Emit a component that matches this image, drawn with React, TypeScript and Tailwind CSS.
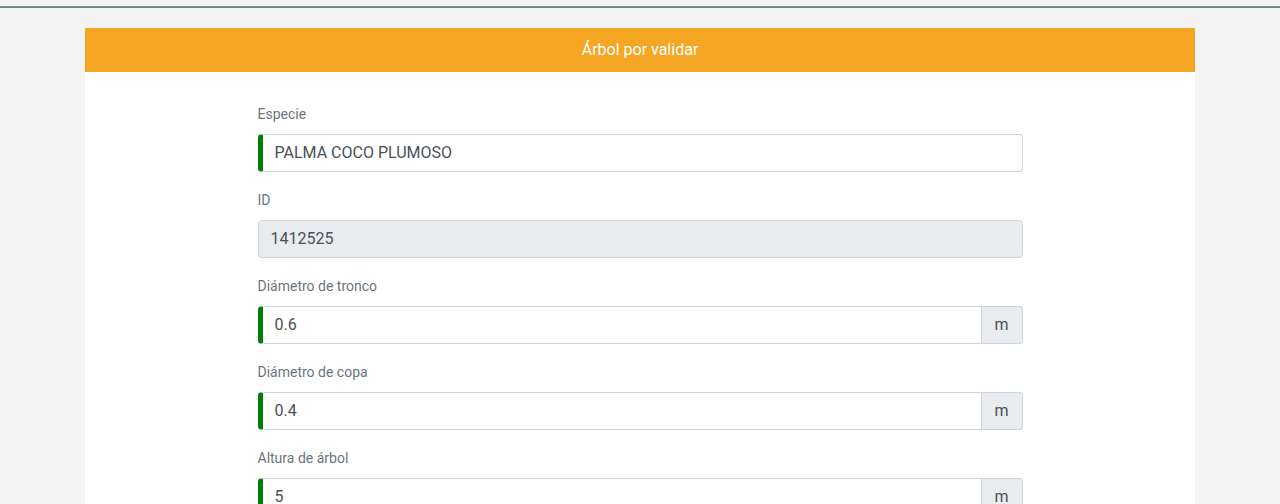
import React from 'react';

const font = { fontFamily: 'Roboto, "Liberation Sans", sans-serif' };

function Field({ label, value, unit, disabled }: { label: string; value: string; unit?: string; disabled?: boolean }) {
  return (
    <div className="mb-4">
      <label className="block h-6 leading-6 text-sm text-[#6c757d] mb-2">{label}</label>
      {disabled ? (
        <div className="h-[38px] flex items-center px-3 bg-[#e9ecef] border border-[#ced4da] rounded text-base text-[#495057]">
          {value}
        </div>
      ) : (
        <div className="flex h-[38px]">
          <div
            className={`flex-1 flex items-center pl-3 bg-white border border-[#ced4da] border-l-[5px] border-l-[#008000] text-base text-[#495057] ${
              unit ? 'rounded-l' : 'rounded'
            }`}
          >
            {value}
          </div>
          {unit && (
            <div className="w-[41px] flex items-center justify-center bg-[#e9ecef] border border-l-0 border-[#ced4da] rounded-r text-base text-[#495057]">
              {unit}
            </div>
          )}
        </div>
      )}
    </div>
  );
}

export default function App() {
  return (
    <div className="min-h-screen bg-[#f4f4f4]" style={font}>
      <div className="h-[6px]" />
      <div className="h-px bg-[#8a8a8a]" />
      <div className="h-px bg-[#5f8f76]" />
      <div className="w-[1110px] mx-auto mt-5 bg-white min-h-[480px]">
        <div className="h-11 flex items-center justify-center bg-[#f5a623] text-white text-base">
          Árbol por validar
        </div>
        <div className="w-[765px] mx-auto pt-[30px]">
          <Field label="Especie" value="PALMA COCO PLUMOSO" />
          <Field label="ID" value="1412525" disabled />
          <Field label="Diámetro de tronco" value="0.6" unit="m" />
          <Field label="Diámetro de copa" value="0.4" unit="m" />
          <Field label="Altura de árbol" value="5" unit="m" />
        </div>
      </div>
    </div>
  );
}
